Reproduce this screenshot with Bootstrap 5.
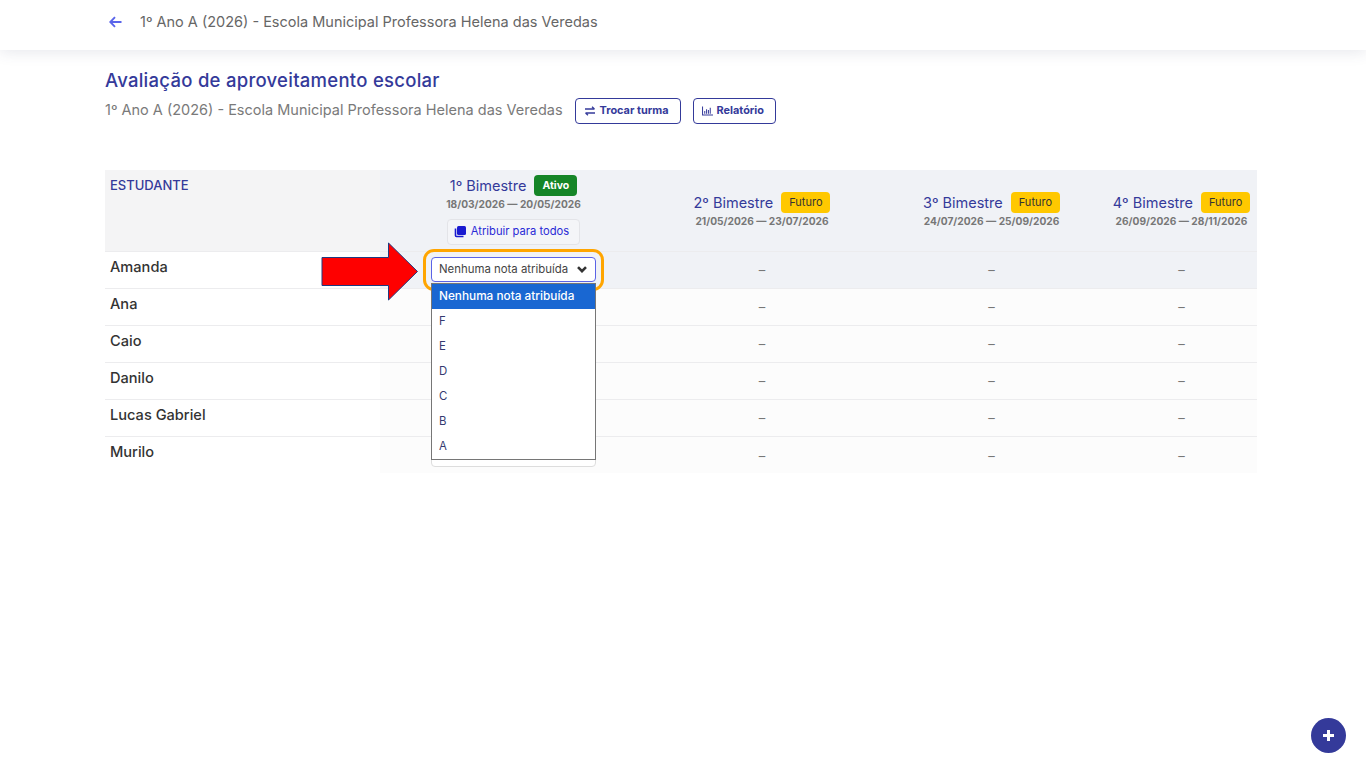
<!DOCTYPE html>
<html lang="pt-BR">
<head>
<meta charset="utf-8">
<title>Avaliação de aproveitamento escolar</title>
<link href="https://cdn.jsdelivr.net/npm/bootstrap@5.3.0/dist/css/bootstrap.min.css" rel="stylesheet">
<style>
body{font-family:Inter,"Liberation Sans",sans-serif;background:#fff;color:#333;overflow:hidden}
.topbar{height:50px;background:#fff;box-shadow:0 2px 14px rgba(60,70,110,.13);padding-left:109px;padding-bottom:7px;color:#666;font-size:14.5px}
.topbar svg{margin-right:18px}
.pagewrap{width:1152px;margin-left:105px;padding-top:20px}
.pagetitle{font-size:18.5px;font-weight:500;letter-spacing:.27px;color:#343a9a;margin:0;line-height:21px}
.subline{height:26px;margin-top:7px;margin-bottom:46px;color:#7a7a7a;font-size:14.5px}
.subline>span{align-self:flex-start;line-height:22px;margin-top:1px}
.btn-outline-app{height:26px;padding:0 11px 1px 8px;border:1px solid #343a9a;border-radius:4px;font-size:10.9px;font-weight:700;color:#343a9a;background:#fff;display:inline-flex;align-items:center;gap:4px}
.subline .btn-outline-app{margin-left:12px}
.gradetable{table-layout:fixed;width:1152px;border-collapse:collapse;position:relative}
.c-name{width:275px}.c-1{width:267px}.c-2{width:230px}.c-3{width:229px}.c-4{width:151px}
.gradetable th{background:#f0f2f6;font-weight:400;text-align:center;vertical-align:middle;height:81px;padding:0;border-bottom:1px solid #ececee}
.gradetable th.h-name{background:#f4f4f5;text-align:left;vertical-align:top;padding:6px 5px;color:#343a9a;font-size:13px;font-weight:500}
.gradetable td{height:37px;padding:3px 0 0;text-align:center;vertical-align:middle;background:#fcfcfc;border-bottom:1px solid #ececee;color:#777;font-size:13px}
.gradetable td.sel-cell{padding:0}
.gradetable td.n-cell{background:#fff;text-align:left;vertical-align:top;padding:6px 5px 4px;font-size:14.6px;font-weight:500;color:#333;line-height:19px}
.gradetable tr.hot td{background:#f0f2f6}
.gradetable tr.hot td.n-cell{background:#fff}
.gradetable tbody tr:last-child td{border-bottom:0}
.pername{font-size:14.5px;color:#343a9a;line-height:20px}
.perrow{display:flex;align-items:center;justify-content:center;gap:8px}
.perdate{font-size:10.2px;font-weight:700;color:#777;line-height:14px;margin-top:1px}
.tag-on,.tag-off{display:inline-block;height:21px;line-height:21px;padding:0 8px;border-radius:4px}
.tag-on{background:#158527;color:#fff;font-weight:700;font-size:10.5px}
.tag-off{background:#ffc800;color:#333;font-size:11px}
.assign{height:26px;width:133px;margin:8px auto 0;padding:0 4px 1px 0;border:1px solid #e3e4e8;border-radius:4px;background:#f4f5f8;font-size:11.2px;color:#2a2ad6;display:flex;align-items:center;justify-content:center;gap:4px}
.selbox{width:165px;height:25px;margin:0 auto;border:1px solid #ddd;border-radius:4px;background:#fff;display:flex;align-items:center;justify-content:space-between;padding:0 8px 0 7px;font-size:11.4px;color:#444}
.hot .selbox{border-color:#5b63e6}
.halo{position:absolute;left:423px;top:249px;width:181px;height:42px;border:3px solid #ffa500;border-radius:11px;pointer-events:none}
.redarrow{position:absolute;left:321px;top:242px}
.poplist{position:absolute;left:431px;top:283px;width:165px;height:177px;background:#fff;border:1px solid #767676;font-size:11.4px;color:#343a70}
.poplist div{height:25px;line-height:25px;padding-left:7px}
.poplist div.picked{background:#1967d2;color:#fff;font-weight:500;font-size:11.8px}
.fab{position:fixed;left:1311px;top:718px;width:35px;height:35px;border-radius:50%;background:#343a9a;display:flex;align-items:center;justify-content:center}
</style>
</head>
<body>
<header class="topbar d-flex align-items-center">
  <svg width="13" height="12" viewBox="0 0 13 12" fill="none" stroke="#5a65ea" stroke-width="1.9"><path d="M12.5 6H1.5M6 1.2 1.3 6 6 10.8"/></svg>
  <span>1º Ano A (2026) - Escola Municipal Professora Helena das Veredas</span>
</header>
<main class="pagewrap">
  <h1 class="pagetitle">Avaliação de aproveitamento escolar</h1>
  <div class="subline d-flex align-items-center">
    <span>1º Ano A (2026) - Escola Municipal Professora Helena das Veredas</span>
    <a class="btn-outline-app text-decoration-none" href="#"><svg width="12" height="10" viewBox="0 0 12 10" fill="none" stroke="#343a9a" stroke-width="1.3"><path d="M1 3h9.5M8 .8l2.500 2.200M11 7H1.500M4 9.200 1.500 7"/></svg>Trocar turma</a>
    <a class="btn-outline-app text-decoration-none" href="#"><svg width="11" height="10" viewBox="0 0 12 10" fill="none" stroke="#343a9a" stroke-width="1.1"><path d="M.6 0v9.400H12M3 5v3M5 3v5M7 4v4M9 1.500v6.500"/></svg>Relatório</a>
  </div>
  <table class="gradetable">
    <colgroup><col class="c-name"><col class="c-1"><col class="c-2"><col class="c-3"><col class="c-4"></colgroup>
    <thead>
      <tr>
        <th class="h-name">ESTUDANTE</th>
        <th>
          <div class="perrow pername">1º Bimestre <span class="tag-on">Ativo</span></div>
          <div class="perdate">18/03/2026 — 20/05/2026</div>
          <div class="assign"><svg width="13" height="13" viewBox="0 0 13 13"><rect x="3" y="1" width="9" height="9" rx="1.500" fill="#1a1ad0"/><path d="M1.500 3.500v7a1 1 0 0 0 1 1h7" fill="none" stroke="#1a1ad0" stroke-width="1.600"/></svg>Atribuir para todos</div>
        </th>
        <th><div class="perrow pername">2º Bimestre <span class="tag-off">Futuro</span></div><div class="perdate">21/05/2026 — 23/07/2026</div></th>
        <th><div class="perrow pername">3º Bimestre <span class="tag-off">Futuro</span></div><div class="perdate">24/07/2026 — 25/09/2026</div></th>
        <th><div class="perrow pername">4º Bimestre <span class="tag-off">Futuro</span></div><div class="perdate">26/09/2026 — 28/11/2026</div></th>
      </tr>
    </thead>
    <tbody>
      <tr class="hot"><td class="n-cell">Amanda</td><td class="sel-cell"><div class="selbox"><span>Nenhuma nota atribuída</span><svg width="10" height="7" viewBox="0 0 10 7" fill="none" stroke="#333" stroke-width="2.600"><path d="M1 1.200 5 5.200 9 1.200"/></svg></div></td><td>–</td><td>–</td><td>–</td></tr>
      <tr><td class="n-cell">Ana</td><td class="sel-cell"><div class="selbox"></div></td><td>–</td><td>–</td><td>–</td></tr>
      <tr><td class="n-cell">Caio</td><td class="sel-cell"><div class="selbox"></div></td><td>–</td><td>–</td><td>–</td></tr>
      <tr><td class="n-cell">Danilo</td><td class="sel-cell"><div class="selbox"></div></td><td>–</td><td>–</td><td>–</td></tr>
      <tr><td class="n-cell">Lucas Gabriel</td><td class="sel-cell"><div class="selbox"></div></td><td>–</td><td>–</td><td>–</td></tr>
      <tr><td class="n-cell">Murilo</td><td class="sel-cell"><div class="selbox"></div></td><td>–</td><td>–</td><td>–</td></tr>
    </tbody>
  </table>
</main>
<div class="halo"></div>
<div class="poplist">
  <div class="picked">Nenhuma nota atribuída</div><div>F</div><div>E</div><div>D</div><div>C</div><div>B</div><div>A</div>
</div>
<svg class="redarrow" width="98" height="59" viewBox="0 0 98 59"><path d="M1 15.500H67.500V1L96.500 29.500 67.500 58V43.500H1Z" fill="#fe0000" stroke="#1f3a80"/></svg>
<a class="fab" href="#" aria-label="Adicionar"><svg width="13" height="13" viewBox="0 0 13 13"><path d="M6.500 1v11M1 6.500h11" stroke="#fff" stroke-width="3"/></svg></a>
<script src="https://cdn.jsdelivr.net/npm/bootstrap@5.3.0/dist/js/bootstrap.bundle.min.js"></script>
</body>
</html>
